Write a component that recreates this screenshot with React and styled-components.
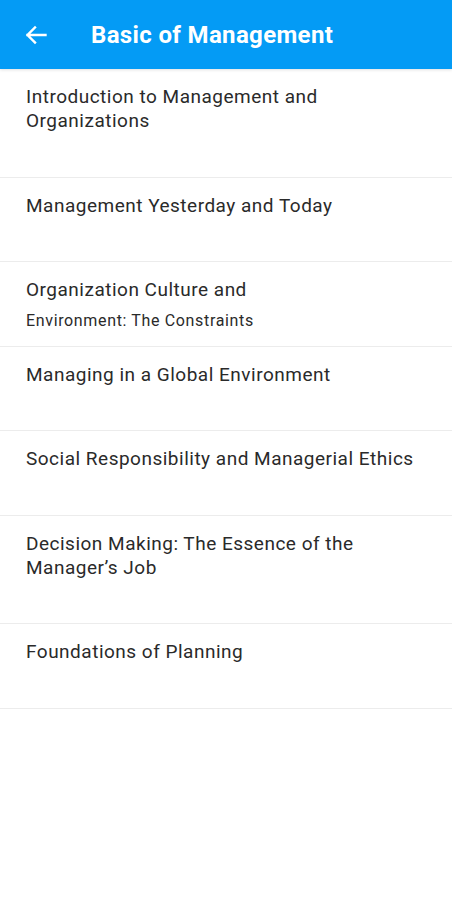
import React from 'react';
import styled, { createGlobalStyle } from 'styled-components';

const GlobalStyle = createGlobalStyle`
  html, body {
    margin: 0;
    padding: 0;
    background: #fff;
    font-family: Roboto, "Noto Sans", sans-serif;
  }
`;

const Page = styled.div`
  width: 452px;
  min-height: 900px;
  background: #fff;
`;

const Header = styled.header`
  height: 69px;
  background: #049bf5;
  display: flex;
  align-items: center;
  padding: 0 0 0 24px;
  box-shadow: 0 1px 3px rgba(0, 0, 0, 0.12);
  position: relative;
  z-index: 1;
`;

const BackButton = styled.button`
  border: none;
  background: none;
  padding: 0;
  width: 24px;
  height: 24px;
  display: flex;
  align-items: center;
  justify-content: center;
  color: #fff;
  cursor: pointer;
`;

const Title = styled.h1`
  margin: 0 0 0 43px;
  font-size: 24px;
  font-weight: 700;
  color: #fff;
  letter-spacing: 0.35px;
`;

const List = styled.ul`
  list-style: none;
  margin: 0;
  padding: 0;
`;

const Row = styled.li`
  padding: 16px 26px ${p => (p.$tight ? '22.5px' : '43.5px')};
  border-bottom: 1px solid #ececec;
  color: #2a2a2a;
  font-size: 19px;
  line-height: 24px;
  letter-spacing: 0.5px;
`;

const SubLine = styled.div`
  font-size: 16px;
  line-height: 20px;
  letter-spacing: 0.65px;
  margin-top: 9px;
  margin-bottom: -8px;
`;

const ArrowBack = () => (
  <svg width="24" height="24" viewBox="0 0 24 24" fill="none" stroke="currentColor"
    strokeWidth="2.4" strokeLinecap="square">
    <path d="M21.5 12H3.5M11 4.5L3.5 12 11 19.5" />
  </svg>
);

const chapters = [
  { title: 'Introduction to Management and Organizations' },
  { title: 'Management Yesterday and Today' },
  { title: 'Organization Culture and', sub: 'Environment: The Constraints' },
  { title: 'Managing in a Global Environment' },
  { title: 'Social Responsibility and Managerial Ethics' },
  { title: 'Decision Making: The Essence of the Manager\u2019s Job' },
  { title: 'Foundations of Planning' },
];

export default function App() {
  return (
    <Page>
      <GlobalStyle />
      <Header>
        <BackButton aria-label="Back">
          <ArrowBack />
        </BackButton>
        <Title>Basic of Management</Title>
      </Header>
      <List>
        {chapters.map(c => (
          <Row key={c.title} $tight={!!c.sub}>
            {c.title}
            {c.sub && <SubLine>{c.sub}</SubLine>}
          </Row>
        ))}
      </List>
    </Page>
  );
}
